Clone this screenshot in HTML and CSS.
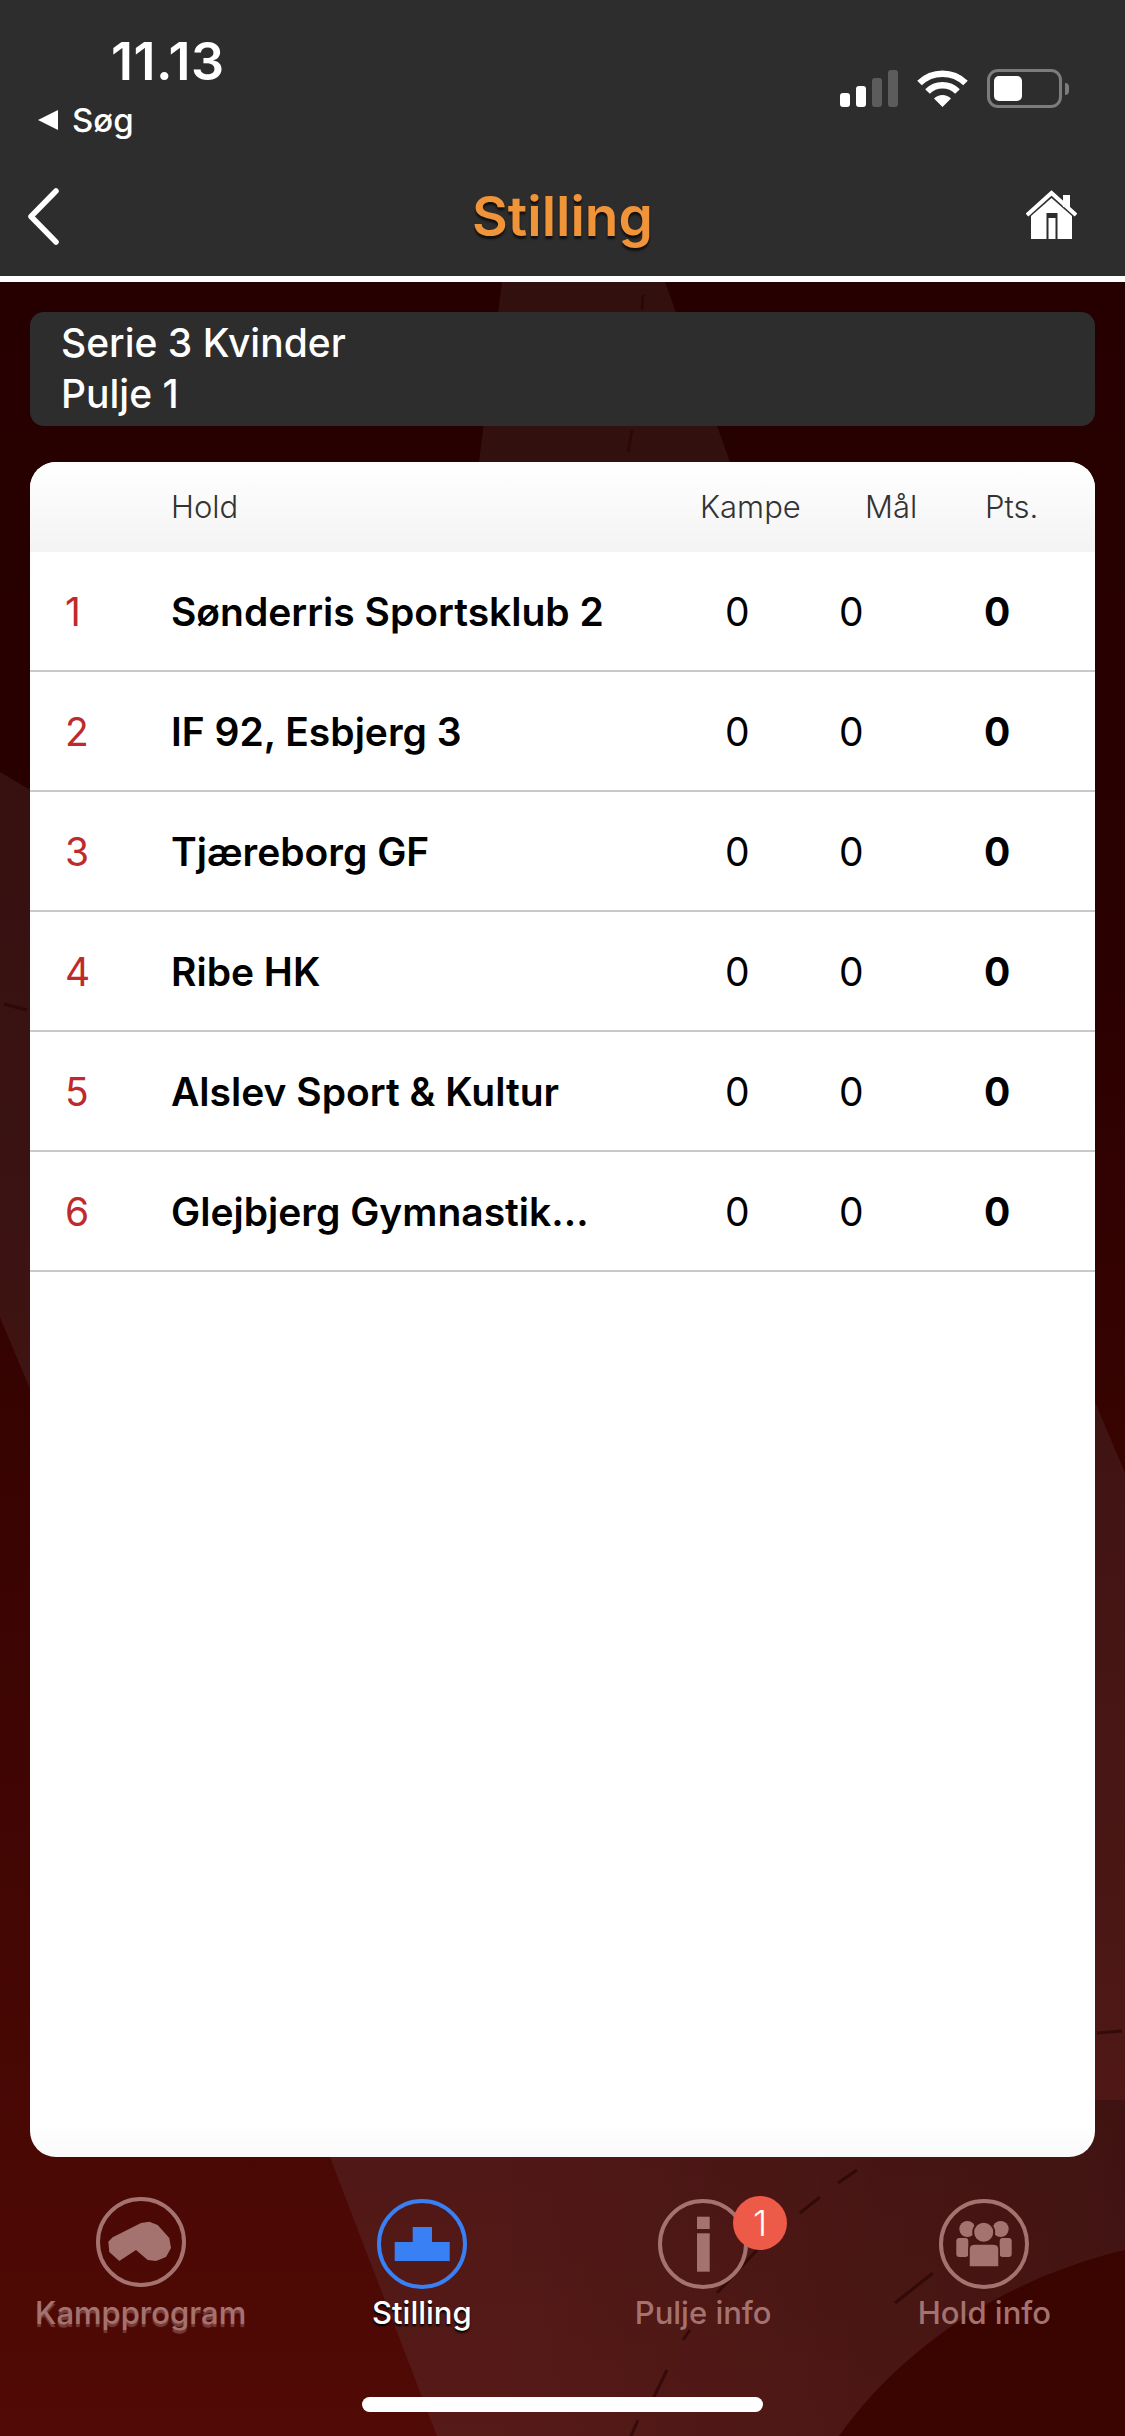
FILE: index.html
```html
<!DOCTYPE html>
<html lang="da">
<head>
    <meta charset="UTF-8">
    <meta name="viewport" content="width=device-width, initial-scale=1.0">
    <title>Stilling</title>
    <link rel="stylesheet" href="styles.css">
</head>
<body>
    <div class="phone">
        <!-- baggrund -->
        <svg class="backdrop" width="1125" height="2436" viewBox="0 0 1125 2436">
            <defs>
                <linearGradient id="base" x1="0" y1="282" x2="0" y2="2436" gradientUnits="userSpaceOnUse">
                    <stop offset="0" stop-color="#260000"/>
                    <stop offset="0.3" stop-color="#2a0000"/>
                    <stop offset="1" stop-color="#510a05"/>
                </linearGradient>
                <linearGradient id="light" x1="0" y1="282" x2="0" y2="2436" gradientUnits="userSpaceOnUse">
                    <stop offset="0" stop-color="#31100e"/>
                    <stop offset="0.4" stop-color="#3a1212"/>
                    <stop offset="1" stop-color="#561a17"/>
                </linearGradient>
                <linearGradient id="fade" x1="330" y1="0" x2="1125" y2="0" gradientUnits="userSpaceOnUse">
                    <stop offset="0.2" stop-color="#000" stop-opacity="0"/>
                    <stop offset="1" stop-color="#000" stop-opacity="0.2"/>
                </linearGradient>
            </defs>
            <rect width="1125" height="2436" fill="url(#base)"/>
            <path id="shape" d="M502 282 L665 282 L730 462 L1092 1395 L1125 1473 L1125 2250 C1000 2280 900 2350 839 2436 L437 2436 L330 2157 L30 1389 L0 1317 L0 772 L30 790 L479 462 Z" fill="url(#light)"/>
            <path d="M400 2100 H1125 V2250 C1000 2280 900 2350 839 2436 H400 Z" fill="url(#fade)"/>
            <path d="M1125 2250 C1000 2280 900 2350 839 2436 H1125 Z" fill="#3a0501"/>
            <g class="cracks">
                <path d="M643 295 L642 310 M632 430 L628 452"/>
                <path d="M4 1004 L27 1010 M1097 2033 L1122 2031"/>
                <path d="M857 2170 L838 2183 M820 2197 L800 2213 M933 2273 L895 2303 M757 2250 L717 2293 M690 2330 L683 2340 M667 2370 L649 2407 M638 2420 L631 2436"/>
            </g>
        </svg>

        <header class="top">
            <div class="status">
                <div class="status-left">
                    <div class="time">11.13</div>
                    <div class="return"><span class="return-arrow"></span>Søg</div>
                </div>
                <div class="status-right">
                    <svg class="signal" width="58" height="37" viewBox="0 0 58 37">
                        <rect x="0" y="23" width="10" height="14" rx="3" fill="#fff"/>
                        <rect x="16" y="16" width="10" height="21" rx="3" fill="#fff"/>
                        <rect x="32" y="8" width="10" height="29" rx="3" fill="#5c5c5c"/>
                        <rect x="48" y="0" width="10" height="37" rx="3" fill="#5c5c5c"/>
                    </svg>
                    <svg class="wifi" width="51" height="37" viewBox="0 0 51 37">
                        <path d="M2.5 13 A33 33 0 0 1 48.500 13" fill="none" stroke="#fff" stroke-width="6.500"/>
                        <path d="M10.500 21.500 A21 21 0 0 1 40.500 21.500" fill="none" stroke="#fff" stroke-width="6.500"/>
                        <path d="M17 28.500 A12 12 0 0 1 34 28.500 L25.500 37 Z" fill="#fff"/>
                    </svg>
                    <div class="battery">
                        <div class="battery-fill"></div>
                    </div>
                    <div class="battery-nub"></div>
                </div>
            </div>
            <div class="nav">
                <svg class="back" width="34" height="57" viewBox="0 0 34 57">
                    <path d="M30 3 L5 28.500 L30 54" fill="none" stroke="#fff" stroke-width="5.500" stroke-linecap="round" stroke-linejoin="round"/>
                </svg>
                <h1 class="title">Stilling</h1>
                <svg class="home" width="51" height="49" viewBox="0 0 51 49">
                    <rect x="37" y="5" width="7" height="12" fill="#fff"/>
                    <path d="M1 25 L25.500 3 L50 25" fill="none" stroke="#fff" stroke-width="4"/>
                    <path d="M5 26 L25.500 8 L46 26 V49 H5 Z" fill="#fff"/>
                    <path d="M20.500 23 H31.500 V49 H29.500 V28 H22.500 V49 H20.500 Z" fill="#2d2d2d"/>
                </svg>
            </div>
        </header>

        <main class="content">
            <div class="pool-box">
                <div>Serie 3 Kvinder</div>
                <div>Pulje 1</div>
            </div>

            <section class="table">
                <div class="table-head">
                    <span></span>
                    <span>Hold</span>
                    <span>Kampe</span>
                    <span>Mål</span>
                    <span>Pts.</span>
                </div>
                <div class="row">
                    <span class="rank">1</span>
                    <span class="team">Sønderris Sportsklub 2</span>
                    <span>0</span>
                    <span>0</span>
                    <span class="pts">0</span>
                </div>
                <div class="row">
                    <span class="rank">2</span>
                    <span class="team">IF 92, Esbjerg 3</span>
                    <span>0</span>
                    <span>0</span>
                    <span class="pts">0</span>
                </div>
                <div class="row">
                    <span class="rank">3</span>
                    <span class="team">Tjæreborg GF</span>
                    <span>0</span>
                    <span>0</span>
                    <span class="pts">0</span>
                </div>
                <div class="row">
                    <span class="rank">4</span>
                    <span class="team">Ribe HK</span>
                    <span>0</span>
                    <span>0</span>
                    <span class="pts">0</span>
                </div>
                <div class="row">
                    <span class="rank">5</span>
                    <span class="team">Alslev Sport &amp; Kultur</span>
                    <span>0</span>
                    <span>0</span>
                    <span class="pts">0</span>
                </div>
                <div class="row">
                    <span class="rank">6</span>
                    <span class="team">Glejbjerg Gymnastik...</span>
                    <span>0</span>
                    <span>0</span>
                    <span class="pts">0</span>
                </div>
            </section>
        </main>

        <nav class="tabs">
            <div class="tab-row">
                <div class="tab">
                    <svg class="tab-icon whistle" width="90" height="90" viewBox="0 0 90 90">
                        <circle cx="45" cy="45" r="43" fill="none" stroke="#a47370" stroke-width="4"/>
                        <path d="M12.300 44.700 L16.700 40.300 L45 26 L53.300 24.700 L61.700 28 L73.300 41 L75 51 L70 60 L60 64 L51.700 63 L40 53 L23.300 64 L13.300 55 Z" fill="#a47370"/>
                    </svg>
                    <span class="tab-label tab-label-shadow">Kampprogram</span>
                </div>
                <div class="tab tab-active">
                    <svg class="tab-icon" width="90" height="90" viewBox="0 0 90 90">
                        <circle cx="45" cy="45" r="43" fill="none" stroke="#3a80f5" stroke-width="4"/>
                        <path d="M35.700 28 H55 V43 H72.700 V62 H17.700 V43 H35.700 Z" fill="#3a80f5"/>
                    </svg>
                    <span class="tab-label">Stilling</span>
                </div>
                <div class="tab">
                    <div class="icon-wrap">
                        <svg class="tab-icon" width="90" height="90" viewBox="0 0 90 90">
                            <circle cx="45" cy="45" r="43" fill="none" stroke="#a47370" stroke-width="4"/>
                            <rect x="39" y="17.700" width="12.700" height="12.300" fill="#a47370"/>
                            <rect x="39" y="34.300" width="12.700" height="38.400" fill="#a47370"/>
                        </svg>
                        <span class="badge">1</span>
                    </div>
                    <span class="tab-label">Pulje info</span>
                </div>
                <div class="tab">
                    <svg class="tab-icon" width="90" height="90" viewBox="0 0 90 90">
                        <circle cx="45" cy="45" r="43" fill="none" stroke="#a47370" stroke-width="4"/>
                        <circle cx="28.300" cy="30" r="8" fill="#a47370"/>
                        <circle cx="61.700" cy="30" r="8" fill="#a47370"/>
                        <rect x="17.300" y="39" width="12" height="19" rx="3" fill="#a47370"/>
                        <rect x="60.700" y="39" width="12" height="19" rx="3" fill="#a47370"/>
                        <circle cx="44.700" cy="33.300" r="10.500" fill="#a47370" stroke="#451512" stroke-width="2"/>
                        <path d="M30 68 V50 Q30 45 36 45 H54 Q60 45 60 50 V68 Z" fill="#a47370" stroke="#451512" stroke-width="1.500"/>
                    </svg>
                    <span class="tab-label">Hold info</span>
                </div>
            </div>
            <div class="home-bar"></div>
        </nav>
    </div>
</body>
</html>
```

FILE: styles.css
```css
html, body {
    margin: 0;
    padding: 0;
}

body {
    font-family: Inter, "Noto Sans", sans-serif;
    background-color: #260000;
}

.phone {
    position: relative;
    width: 1125px;
    height: 2436px;
    overflow: hidden;
    display: flex;
    flex-direction: column;
}

.backdrop {
    position: absolute;
    left: 0;
    top: 0;
}

.cracks path {
    fill: none;
    stroke: #2a0605;
    stroke-width: 3;
    opacity: 0.7;
}

/* topbar */
.top {
    position: relative;
    height: 276px;
    background-color: #2d2d2d;
    border-bottom: 6px solid #fff;
    color: #fff;
}

.status {
    height: 170px;
    display: flex;
    justify-content: space-between;
}

.status-left {
    padding: 33px 0 0 38px;
}

.time {
    margin-left: 73px;
    font-size: 52px;
    line-height: 58px;
    font-weight: 600;
    letter-spacing: 0.5px;
}

.return {
    display: flex;
    align-items: center;
    margin-top: 9px;
    font-size: 33px;
    line-height: 40px;
    font-weight: 500;
}

.return-arrow {
    width: 0;
    height: 0;
    margin-right: 14px;
    border-top: 10px solid transparent;
    border-bottom: 10px solid transparent;
    border-right: 20px solid #fff;
}

.status-right {
    display: flex;
    align-items: flex-start;
    padding: 70px 56px 0 0;
}

.wifi {
    margin-left: 19px;
}

.battery {
    box-sizing: border-box;
    width: 75px;
    height: 39px;
    margin: -1px 0 0 19px;
    padding: 4px;
    border: 3px solid #7c7c7c;
    border-radius: 11px;
}

.battery-fill {
    width: 28px;
    height: 100%;
    background-color: #fff;
    border-radius: 5px;
}

.battery-nub {
    width: 4px;
    height: 12px;
    margin: 13px 0 0 3px;
    background-color: #7c7c7c;
    border-radius: 0 6px 6px 0;
}

.nav {
    display: grid;
    grid-template-columns: 1fr auto 1fr;
    align-items: start;
    padding: 18px 48px 0;
}

.back {
    display: block;
    margin-left: -22px;
}

.home {
    display: block;
    justify-self: end;
    margin-top: 2px;
}

.title {
    margin: -3px 0 0;
    font-size: 55px;
    line-height: 62px;
    font-weight: 600;
    color: #f0943a;
    text-shadow: 0 3px 2px #111;
}

/* main */
.content {
    position: relative;
    padding: 30px 30px 0;
}

.pool-box {
    box-sizing: border-box;
    height: 114px;
    padding: 5px 31px 0;
    background-color: #2d2d2d;
    border-radius: 14px;
    color: #fff;
    font-size: 39px;
    line-height: 51px;
    font-weight: 500;
}

.table {
    box-sizing: border-box;
    height: 1695px;
    margin-top: 36px;
    background: linear-gradient(to bottom, #fff 98%, #f9f9f9);
    border-radius: 26px;
    overflow: hidden;
}

.table-head {
    display: grid;
    grid-template-columns: 141px 529px 165px 120px auto;
    align-items: center;
    height: 88px;
    padding-bottom: 2px;
    background: linear-gradient(to bottom, #fff, #f3f3f3);
    color: #333;
    font-size: 31px;
    font-weight: 300;
}

.row {
    box-sizing: border-box;
    display: grid;
    grid-template-columns: 141px 554px 114px 145px auto;
    align-items: center;
    height: 120px;
    border-bottom: 2px solid #c9c9c9;
    color: #000;
    font-size: 39px;
}

.rank {
    padding-left: 35px;
    color: #bd2b2b;
}

.team {
    font-weight: 600;
    white-space: nowrap;
}

.pts {
    font-weight: 700;
}

/* tabs */
.tabs {
    position: relative;
    height: 279px;
    display: flex;
    flex-direction: column;
    align-items: center;
}

.tab-row {
    display: grid;
    grid-template-columns: repeat(4, 1fr);
    width: 100%;
    height: 240px;
    padding-top: 42px;
    box-sizing: border-box;
}

.tab {
    display: flex;
    flex-direction: column;
    align-items: center;
}

.tab-icon {
    display: block;
}

.whistle {
    margin: -2px 0 2px;
}

.icon-wrap {
    position: relative;
}

.badge {
    position: absolute;
    left: 75px;
    top: -3px;
    width: 54px;
    height: 54px;
    border-radius: 50%;
    background-color: #ee5a48;
    color: #fff;
    font-size: 36px;
    font-weight: 300;
    line-height: 54px;
    text-align: center;
}

.tab-label {
    margin-top: 4px;
    color: #a47370;
    font-size: 31px;
    line-height: 40px;
    font-weight: 500;
}

.tab-label-shadow {
    text-shadow: 0 3px 1px rgba(164, 115, 112, 0.5);
}

.tab-active .tab-label {
    color: #fff;
    text-shadow: 0 2px 2px #000;
}

.home-bar {
    width: 401px;
    height: 15px;
    background-color: #fff;
    border-radius: 8px;
}
```
